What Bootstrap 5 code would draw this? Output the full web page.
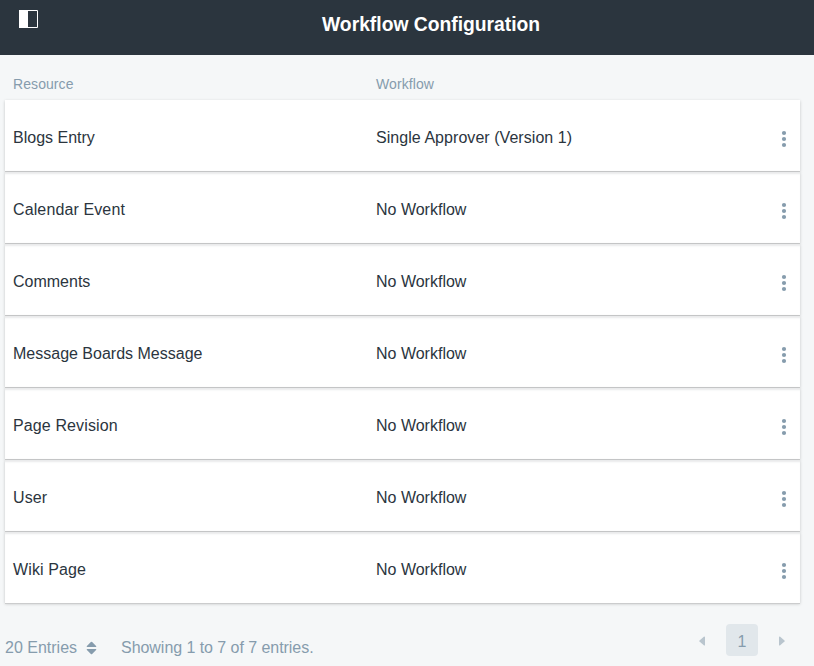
<!DOCTYPE html>
<html lang="en">
<head>
<meta charset="utf-8">
<meta name="viewport" content="width=device-width, initial-scale=1">
<title>Workflow Configuration</title>
<link href="https://cdn.jsdelivr.net/npm/bootstrap@5.3.0/dist/css/bootstrap.min.css" rel="stylesheet">
<style>
body{background:#f5f7f8;color:#2b353e;font-family:"Liberation Sans",Arial,sans-serif;font-size:16px;line-height:24px;height:666px;overflow:hidden}
.topbar{background:#2b353e;height:55px}
.topbar h1{font-size:19.3px;line-height:24px}
.panel-icon{width:19px;height:18px;margin:10px 0 0 19px}
.title-wrap{margin-left:284px;margin-top:13px}
.muted{color:#869cad}
.list-head{margin-left:5px;width:795px;height:44px;font-size:14px;padding-top:17px;letter-spacing:.08px}
.entries{margin-left:5px;width:795px;padding-top:1px}
.entry{background:#fff;height:71px;margin-bottom:1px;box-shadow:0 1px 0 #cbcccd,0 1px 3px rgba(0,0,0,.2);padding-top:4px}
.entry + .entry{box-shadow:0 1px 0 #cbcccd,0 1px 3px rgba(0,0,0,.2),0 -1px 0 #cbcccd,inset 0 3px 2px -1px #e9eaeb}
.spaced{letter-spacing:.05px}
.spaced-wide{letter-spacing:.12px}
.res{width:363px}
.dots{width:6px;height:18px;margin-right:13px;margin-top:3px}
.footer-bar{margin-left:5px;width:795px;padding-top:20px}
.count{margin-top:12px}
.sort{margin:0 24px 1px 9px}
.showing{letter-spacing:-.05px}
.page-num{width:32px;height:32px;background:#e1e7eb;border-radius:4px;padding-top:3px}
.pager{margin-right:15px;gap:20px}
.pager svg{margin-top:2px}
</style>
</head>
<body>
<header class="topbar d-flex align-items-start text-white">
  <svg class="panel-icon flex-shrink-0" viewBox="0 0 19 18"><path fill="none" stroke="#fff" d="M.5.5h18v17H.5z"/><path fill="#fff" d="M0 0h9v18H0z"/></svg>
  <div class="title-wrap"><h1 class="fw-bold mb-0 text-nowrap">Workflow Configuration</h1></div>
</header>
<main>
  <div class="list-head muted d-flex px-2"><div class="res">Resource</div><div>Workflow</div></div>
  <div class="entries">
    <div class="entry d-flex align-items-center ps-2"><div class="res">Blogs Entry</div><div class="flex-grow-1 spaced">Single Approver (Version 1)</div><svg class="dots" viewBox="0 0 6 18"><g fill="#869cad"><circle cx="3" cy="3" r="2.1"/><circle cx="3" cy="9" r="2.1"/><circle cx="3" cy="15" r="2.1"/></g></svg></div>
    <div class="entry d-flex align-items-center ps-2"><div class="res spaced-wide">Calendar Event</div><div class="flex-grow-1">No Workflow</div><svg class="dots" viewBox="0 0 6 18"><g fill="#869cad"><circle cx="3" cy="3" r="2.1"/><circle cx="3" cy="9" r="2.1"/><circle cx="3" cy="15" r="2.1"/></g></svg></div>
    <div class="entry d-flex align-items-center ps-2"><div class="res">Comments</div><div class="flex-grow-1">No Workflow</div><svg class="dots" viewBox="0 0 6 18"><g fill="#869cad"><circle cx="3" cy="3" r="2.1"/><circle cx="3" cy="9" r="2.1"/><circle cx="3" cy="15" r="2.1"/></g></svg></div>
    <div class="entry d-flex align-items-center ps-2"><div class="res">Message Boards Message</div><div class="flex-grow-1">No Workflow</div><svg class="dots" viewBox="0 0 6 18"><g fill="#869cad"><circle cx="3" cy="3" r="2.1"/><circle cx="3" cy="9" r="2.1"/><circle cx="3" cy="15" r="2.1"/></g></svg></div>
    <div class="entry d-flex align-items-center ps-2"><div class="res spaced-wide">Page Revision</div><div class="flex-grow-1">No Workflow</div><svg class="dots" viewBox="0 0 6 18"><g fill="#869cad"><circle cx="3" cy="3" r="2.1"/><circle cx="3" cy="9" r="2.1"/><circle cx="3" cy="15" r="2.1"/></g></svg></div>
    <div class="entry d-flex align-items-center ps-2"><div class="res spaced-wide">User</div><div class="flex-grow-1">No Workflow</div><svg class="dots" viewBox="0 0 6 18"><g fill="#869cad"><circle cx="3" cy="3" r="2.1"/><circle cx="3" cy="9" r="2.1"/><circle cx="3" cy="15" r="2.1"/></g></svg></div>
    <div class="entry d-flex align-items-center ps-2"><div class="res spaced-wide">Wiki Page</div><div class="flex-grow-1">No Workflow</div><svg class="dots" viewBox="0 0 6 18"><g fill="#869cad"><circle cx="3" cy="3" r="2.1"/><circle cx="3" cy="9" r="2.1"/><circle cx="3" cy="15" r="2.1"/></g></svg></div>
  </div>
</main>
<footer class="footer-bar muted d-flex justify-content-between align-items-start">
  <div class="count d-flex align-items-center">
    <span>20 Entries</span>
    <svg class="sort" width="11" height="14" viewBox="0 0 12 14"><path fill="#869cad" d="M1.2 6Q.2 5.700 1 4.900L5.300.500Q6 0 6.700.500L11 4.900Q11.800 5.700 10.800 6zM1.200 8Q.2 8.300 1 9.100L5.300 13.500Q6 14 6.700 13.500L11 9.100Q11.800 8.300 10.800 8z"/></svg>
    <span class="showing">Showing 1 to 7 of 7 entries.</span>
  </div>
  <nav class="pager d-flex align-items-center" aria-label="Pages">
    <svg width="7" height="10" viewBox="0 0 7 10"><path fill="#b9c5ce" d="M6 1v8q-.3 1-1.200.3L.5 5.500Q0 5 .5 4.500L4.800.7Q5.700 0 6 1z"/></svg>
    <span class="page-num d-flex align-items-center justify-content-center">1</span>
    <svg width="7" height="10" viewBox="0 0 7 10"><path fill="#b9c5ce" d="M1 1v8q.3 1 1.200.3L6.500 5.500Q7 5 6.500 4.500L2.200.7Q1.300 0 1 1z"/></svg>
  </nav>
</footer>
<script src="https://cdn.jsdelivr.net/npm/bootstrap@5.3.0/dist/js/bootstrap.bundle.min.js"></script>
</body>
</html>
